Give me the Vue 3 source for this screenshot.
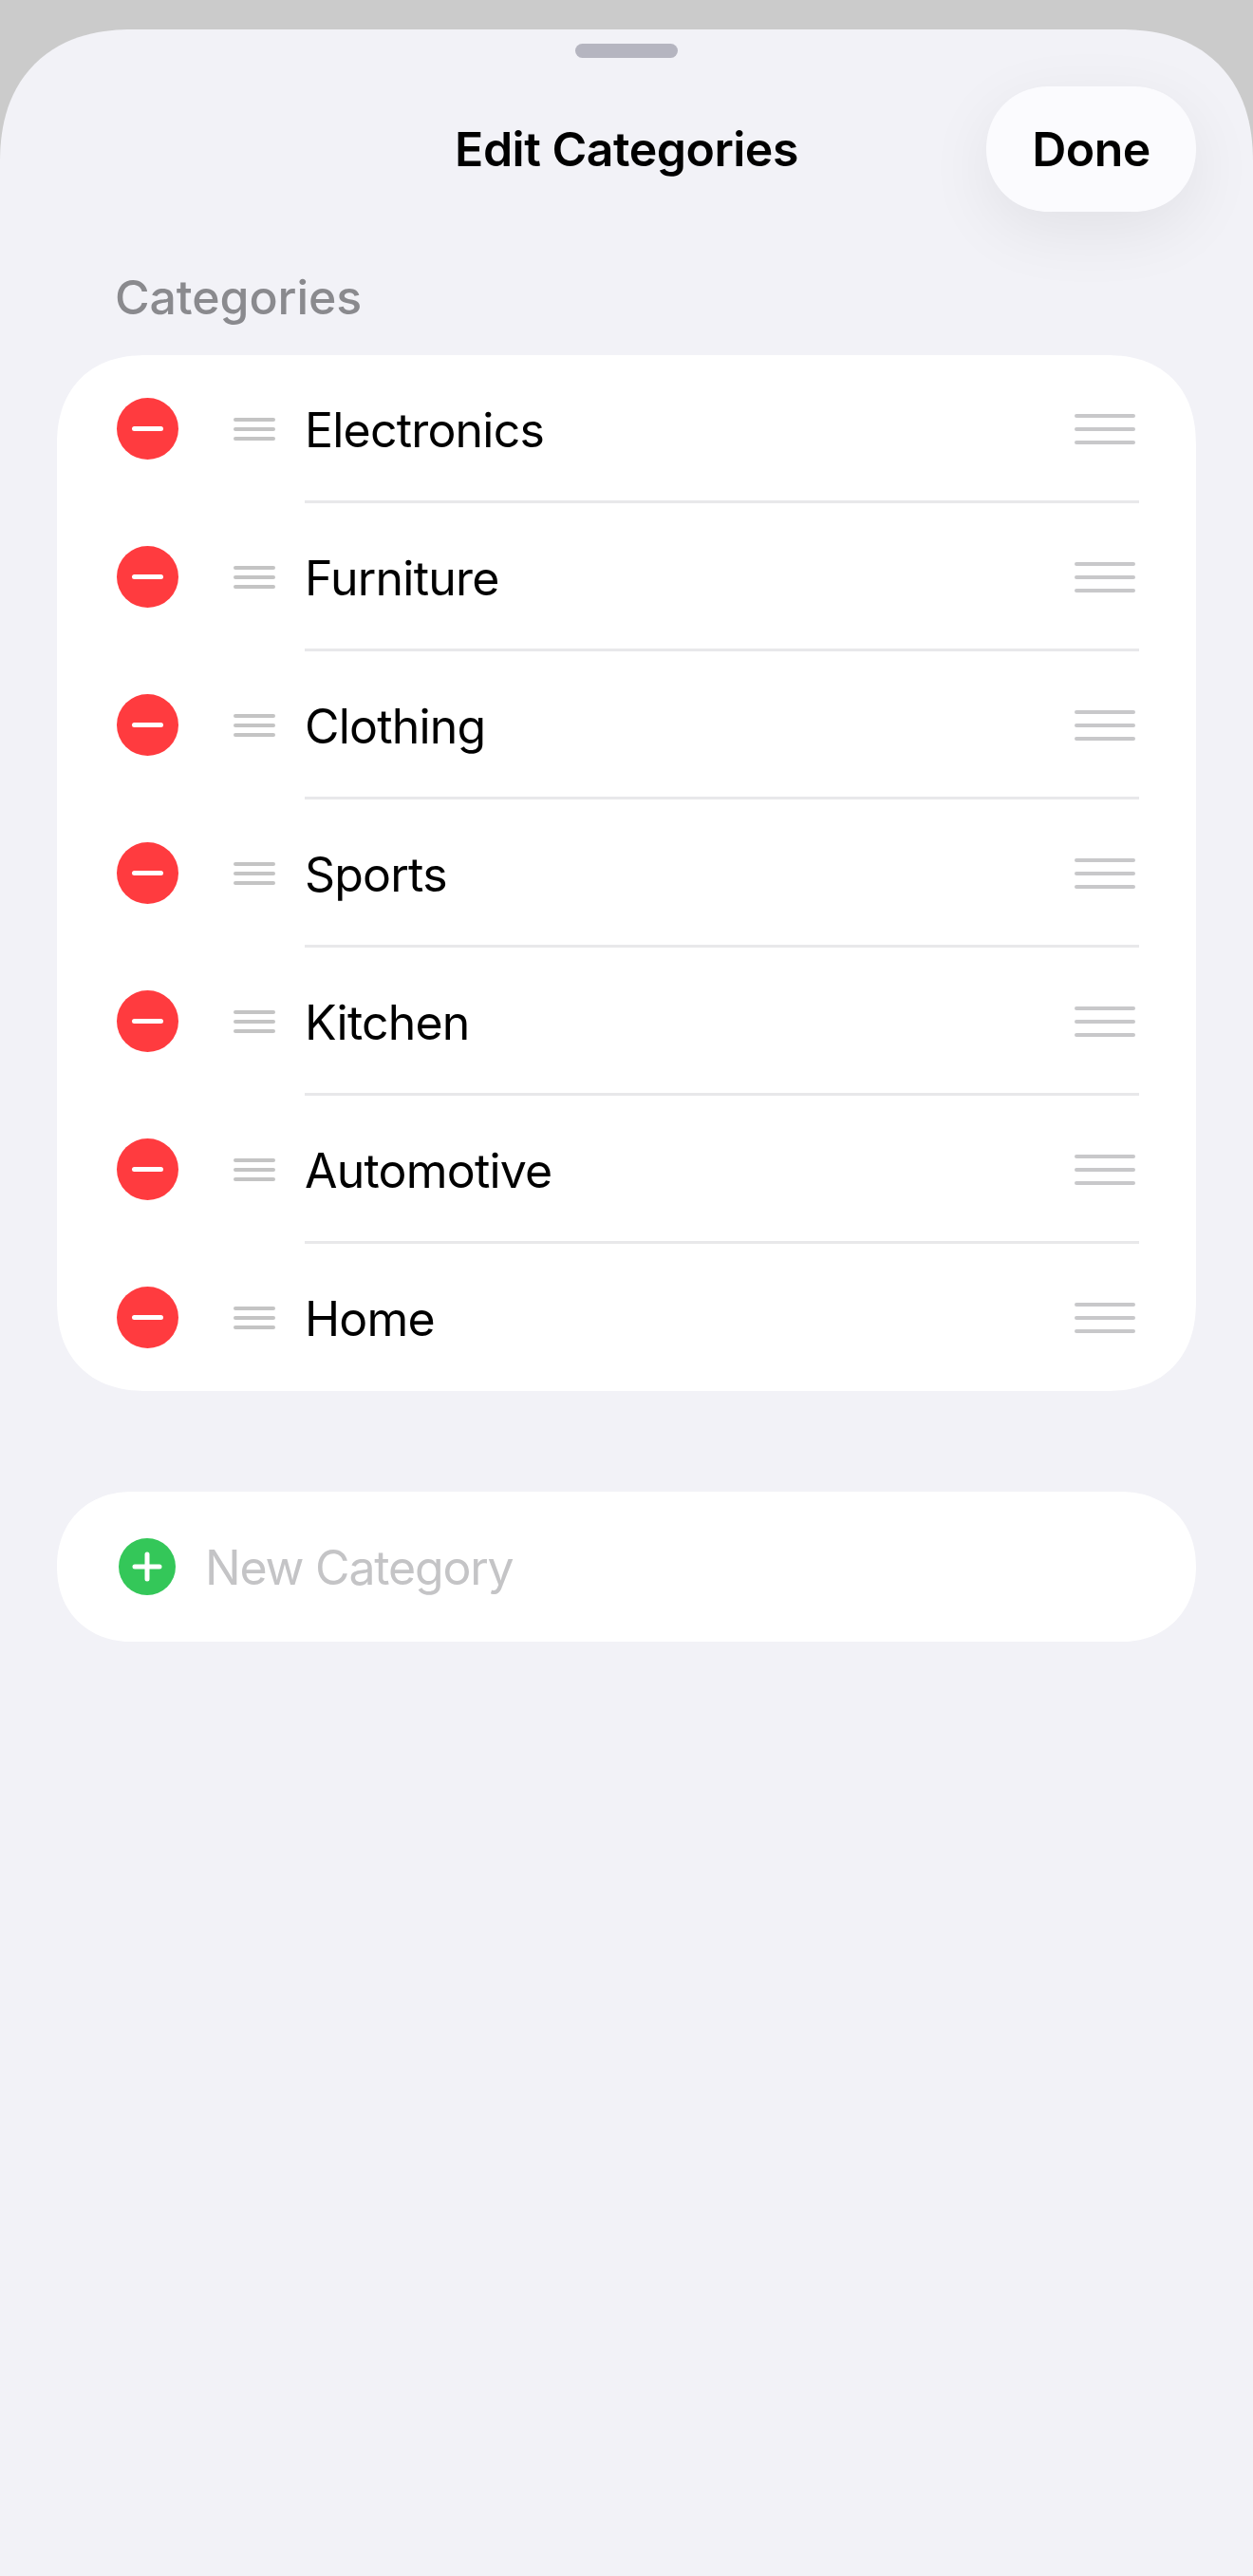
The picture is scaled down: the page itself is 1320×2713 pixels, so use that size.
<template>
  <div class="page">
    <div class="sheet">
      <div class="grabber"></div>

      <header class="topbar">
        <span></span>
        <h1 class="title">Edit Categories</h1>
        <button class="done" type="button">Done</button>
      </header>

      <h2 class="section-label">Categories</h2>

      <ul class="card list">
        <li v-for="name in categories" :key="name" class="row">
          <span class="minus"><i></i></span>
          <span class="grip small"><i></i><i></i><i></i></span>
          <div class="row-main">
            <span class="name">{{ name }}</span>
            <span class="grip large"><i></i><i></i><i></i></span>
          </div>
        </li>
      </ul>

      <div class="card add-row">
        <svg class="plus" width="60" height="60" viewBox="0 0 60 60">
          <circle cx="30" cy="30" r="30" fill="#34c759" />
          <path d="M30 17v26M17 30h26" stroke="#fff" stroke-width="5" stroke-linecap="round" />
        </svg>
        <span class="placeholder">New Category</span>
      </div>
    </div>
  </div>
</template>

<script setup>
const categories = [
  "Electronics",
  "Furniture",
  "Clothing",
  "Sports",
  "Kitchen",
  "Automotive",
  "Home"
];
</script>

<style>
html, body {
  margin: 0;
  background: #f2f2f7;
}
</style>

<style scoped>
.page {
  width: 1320px;
  height: 2713px;
  padding-top: 31px;
  box-sizing: border-box;
  background: #cbcbcb;
  font-family: Inter, "Noto Sans", sans-serif;
  overflow: hidden;
}

.sheet {
  height: 2682px;
  background: #f2f2f7;
  border-radius: 140px 140px 0 0;
  corner-shape: superellipse(1.2);
  padding-top: 15px;
  box-sizing: border-box;
}

.grabber {
  width: 108px;
  height: 15px;
  margin: 0 auto;
  border-radius: 8px;
  background: #b5b5c0;
}

.topbar {
  display: grid;
  grid-template-columns: 1fr auto 1fr;
  align-items: center;
  margin-top: 30px;
  padding: 0 60px;
}

.title {
  margin: 0;
  font-size: 50px;
  font-weight: 600;
  color: #000;
  letter-spacing: -0.5px;
}

.done {
  justify-self: end;
  width: 221px;
  height: 132px;
  padding: 0;
  border: 0;
  border-radius: 66px;
  corner-shape: superellipse(1.05);
  background: #fbfbfe;
  box-shadow: 0 20px 70px rgba(0, 0, 0, 0.07);
  font-family: inherit;
  font-size: 50px;
  font-weight: 600;
  color: #000;
  letter-spacing: -0.5px;
}

.section-label {
  margin: 65px 0 0 121px;
  height: 86px;
  line-height: 50px;
  font-size: 50px;
  font-weight: 500;
  color: #8a8a8e;
  letter-spacing: -0.1px;
}

.card {
  margin: 0 60px;
  background: #fff;
  list-style: none;
  padding: 0;
}

.list {
  height: 1091px;
  border-radius: 95px;
  corner-shape: superellipse(1.2);
  overflow: hidden;
}

.row {
  display: flex;
  align-items: center;
  height: 156px;
  padding-right: 60px;
}

.minus {
  display: flex;
  align-items: center;
  justify-content: center;
  flex: none;
  width: 65px;
  height: 65px;
  margin: -2px 0 0 63px;
  border-radius: 50%;
  background: #ff3b3f;
}

.minus i {
  display: block;
  width: 33px;
  height: 5px;
  border-radius: 3px;
  background: #fff;
}

.grip {
  display: flex;
  flex-direction: column;
  flex: none;
}

.grip i {
  display: block;
  border-radius: 2px;
}

.grip.small {
  width: 44px;
  margin: 0 31px 0 58px;
  gap: 6px;
}

.grip.small i {
  height: 4px;
  background: #c4c4c4;
}

.grip.large {
  width: 64px;
  margin: 3px 4px 0 0;
  gap: 10px;
}

.grip.large i {
  height: 4px;
  background: #c8c8ca;
}

.row-main {
  flex: 1;
  display: flex;
  align-items: center;
  justify-content: space-between;
  height: 100%;
  box-sizing: border-box;
  border-bottom: 3px solid #e8e8ea;
}

.row:last-child .row-main {
  border-bottom-color: transparent;
}

.name {
  padding-top: 5px;
  font-size: 50px;
  color: #000;
  letter-spacing: -0.8px;
}

.add-row {
  display: flex;
  align-items: center;
  height: 158px;
  margin-top: 106px;
  padding-left: 65px;
  border-radius: 79px;
  corner-shape: superellipse(1.1);
}

.plus {
  flex: none;
}

.placeholder {
  margin-left: 31px;
  padding-top: 1px;
  font-size: 50px;
  color: #c4c4c6;
  letter-spacing: -1.2px;
}
</style>
